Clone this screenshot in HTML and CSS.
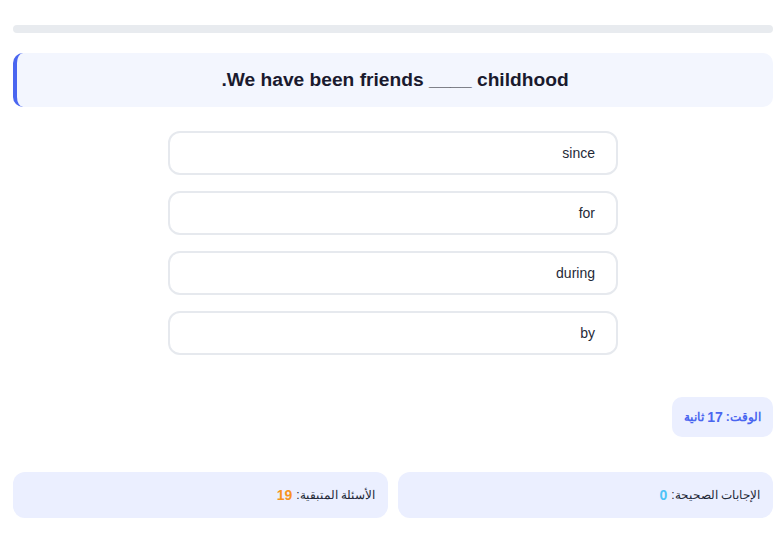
FILE: index.html
```html
<!DOCTYPE html>
<html lang="ar" dir="rtl">
<head>
<meta charset="utf-8">
<title>Quiz</title>
<link rel="stylesheet" href="styles.css">
</head>
<body>
<div class="page">
  <div class="progress"><div class="progress-fill"></div></div>
  <div class="question" dir="rtl">We have been friends ____ childhood.</div>
  <div class="options">
    <button class="option">since</button>
    <button class="option">for</button>
    <button class="option">during</button>
    <button class="option">by</button>
  </div>
  <div class="timer-row">
    <div class="timer">الوقت: <span class="num">17</span> ثانية</div>
  </div>
  <div class="stats">
    <div class="stat">الإجابات الصحيحة: <span class="num correct">0</span></div>
    <div class="stat">الأسئلة المتبقية: <span class="num remaining">19</span></div>
  </div>
</div>
</body>
</html>
```

FILE: styles.css
```css
* { box-sizing: border-box; }
html, body { margin: 0; padding: 0; background: #ffffff; }
body {
  font-family: "Liberation Sans", Arial, sans-serif;
  color: #1f2937;
}
.page {
  padding: 25px 11px 0 13px;
  display: flex;
  flex-direction: column;
}
.progress {
  height: 8px;
  background: #e8ebef;
  border-radius: 4px;
  overflow: hidden;
}
.progress-fill { width: 0; height: 100%; background: #4a6cf7; }
.question {
  margin-top: 20px;
  height: 54px;
  background: #f3f6fe;
  border-left: 4px solid #4a66f0;
  border-radius: 10px;
  display: flex;
  align-items: center;
  justify-content: center;
  font-size: 19.2px;
  font-weight: bold;
  color: #1a1a2e;
}
.options {
  margin-top: 24px;
  display: flex;
  flex-direction: column;
  align-items: center;
  gap: 16px;
}
.option {
  width: 450px;
  height: 44px;
  background: #ffffff;
  border: 2px solid #e6e9ee;
  border-radius: 12px;
  font-family: "Liberation Sans", Arial, sans-serif;
  font-size: 14px;
  color: #1f2937;
  text-align: right;
  padding: 0 21px;
  direction: rtl;
}
.timer-row {
  margin-top: 42px;
  display: flex;
  justify-content: flex-start;
}
.timer {
  height: 40px;
  width: 101px;
  background: #ebefff;
  border-radius: 10px;
  color: #4a66f0;
  font-size: 12px;
  font-weight: bold;
  display: flex;
  align-items: center;
  justify-content: center;
  white-space: nowrap;
}
.timer .num { font-size: 14px; margin: 0 3px; }
.stats {
  margin-top: 35px;
  display: grid;
  grid-template-columns: 1fr 1fr;
  gap: 10px;
}
.stat {
  height: 46px;
  background: #ebefff;
  border-radius: 12px;
  display: flex;
  align-items: center;
  padding: 0 13px;
  font-size: 12px;
  color: #1f2937;
}
.stat .num { font-weight: bold; font-size: 14px; margin-right: 4px; }
.correct { color: #4fc3f7; }
.remaining { color: #f7931e; }
```
